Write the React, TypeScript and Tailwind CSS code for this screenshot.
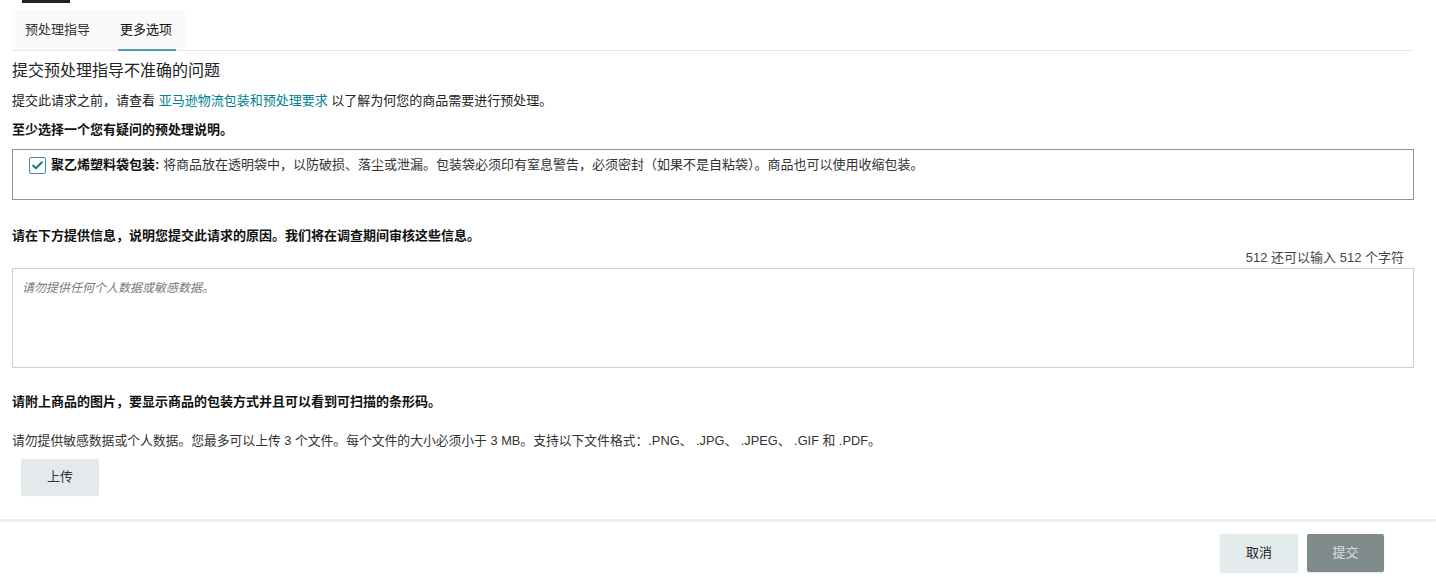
import { Check } from 'lucide-react';

const font = { fontFamily: '"Liberation Sans", "Noto Sans CJK SC", sans-serif' };

export default function App() {
  return (
    <div className="w-[1436px] h-[577px] bg-white text-[#0f1111] overflow-hidden" style={font}>
      <div className="h-[4px] pl-[22px]">
        <div className="w-[48px] h-[3px] bg-[#222]" />
      </div>

      <div className="pl-3 pr-[22px]">
        {/* tabs */}
        <div className="mt-[6px] flex border-b border-[#e7e7e7]">
          <div className="flex bg-[#fafafa] px-[13px] gap-[30px] h-[40px] items-center">
            <div className="text-[13px] text-[#333]">预处理指导</div>
            <div className="relative h-full flex items-center text-[13px] text-[#111]">
              更多选项
              <div className="absolute left-[-2px] right-[-4px] bottom-[-1px] h-[2px] bg-[#4d9eb2]" />
            </div>
          </div>
        </div>

        <h1 className="mt-[9px] text-[16px] leading-[22px] text-[#222]">提交预处理指导不准确的问题</h1>
        <p className="mt-[9px] text-[13px] leading-[20px] text-[#222]">
          提交此请求之前，请查看 <span className="text-[#00818f]">亚马逊物流包装和预处理要求</span> 以了解为何您的商品需要进行预处理。
        </p>
        <p className="mt-[9px] text-[13px] leading-[20px] font-bold">至少选择一个您有疑问的预处理说明。</p>

        <div className="mt-[9px] h-[51px] border border-[#8e9696] px-[16px] pt-[5px]">
          <div className="flex items-center h-[20px] gap-[5px]">
            <div className="w-[17px] h-[17px] border-[1.5px] border-[#3d8fa1] rounded-[2px] flex items-center justify-center bg-white">
              <Check className="w-[13px] h-[13px] text-[#14788c]" strokeWidth={3.5} />
            </div>
            <div className="text-[13px] leading-[20px]">
              <span className="font-bold">聚乙烯塑料袋包装:</span>{' '}
              <span className="text-[#333]">
                将商品放在透明袋中，以防破损、落尘或泄漏。包装袋必须印有窒息警告，必须密封（如果不是自粘袋）。商品也可以使用收缩包装。
              </span>
            </div>
          </div>
        </div>

        <p className="mt-[26px] text-[13px] leading-[20px] font-bold">
          请在下方提供信息，说明您提交此请求的原因。我们将在调查期间审核这些信息。
        </p>
        <div className="mt-[2px] pr-[10px] text-right text-[13px] leading-[20px] text-[#444]">512 还可以输入 512 个字符</div>
        <div className="h-[100px] border border-[#cfcfcf] px-[9px] pt-[6px]">
          <span className="italic text-[12px] text-[#7a7a7a]">请勿提供任何个人数据或敏感数据。</span>
        </div>

        <p className="mt-[24px] text-[13px] leading-[20px] font-bold">
          请附上商品的图片，要显示商品的包装方式并且可以看到可扫描的条形码。
        </p>
        <p className="mt-[19px] text-[12.8px] leading-[20px] text-[#333]">
          请勿提供敏感数据或个人数据。您最多可以上传 3 个文件。每个文件的大小必须小于 3 MB。支持以下文件格式：.PNG、 .JPG、 .JPEG、 .GIF 和 .PDF。
        </p>
        <div className="mt-[8px] ml-[9px]">
          <button className="w-[78px] h-[36px] bg-[#e4eaec] rounded-[2px] text-[13px] text-[#333] shadow-[0_1px_1px_rgba(0,0,0,0.08)]">
            上传
          </button>
        </div>
      </div>

      <div className="mt-[24px] h-[2px] bg-[#ececec] shadow-[0_1px_2px_rgba(0,0,0,0.05)]" />

      <div className="mt-[13px] flex justify-end gap-[9px] pr-[52px]">
        <button className="w-[78px] h-[38px] bg-[#e3ebed] rounded-[2px] text-[13px] text-[#222] shadow-[0_1px_2px_rgba(0,0,0,0.1)]">
          取消
        </button>
        <button className="w-[77px] h-[38px] bg-[#7f8b8b] rounded-[2px] text-[13px] text-[#d9dfdf] shadow-[0_1px_2px_rgba(0,0,0,0.1)]">
          提交
        </button>
      </div>
    </div>
  );
}
